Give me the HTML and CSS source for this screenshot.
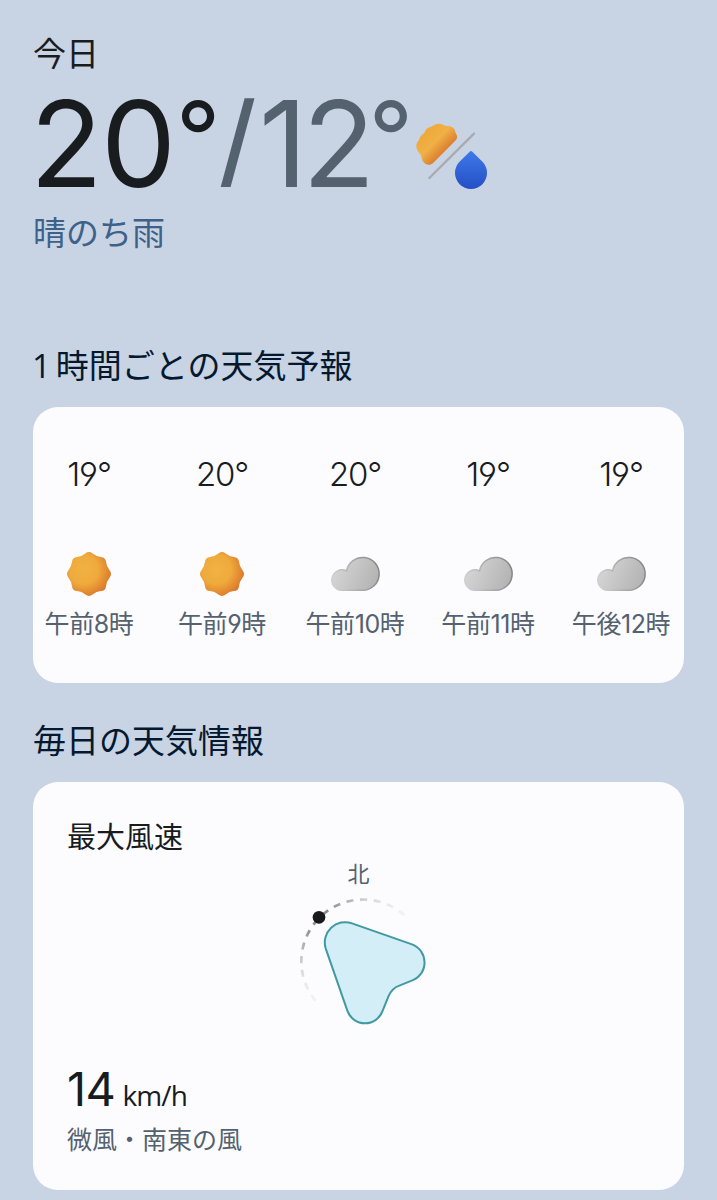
FILE: index.html
```html
<!DOCTYPE html>
<html lang="ja">
<head>
    <meta charset="UTF-8">
    <title>天気</title>
    <link rel="stylesheet" href="styles.css">
</head>
<body>
    <!-- 共通アイコン -->
    <svg class="defs" width="0" height="0">
        <defs>
            <radialGradient id="sunFill" cx="0.38" cy="0.4" r="0.66">
                <stop offset="0" stop-color="#f1b243"/>
                <stop offset="0.5" stop-color="#efaa3c"/>
                <stop offset="1" stop-color="#d9752a"/>
            </radialGradient>
            <linearGradient id="halfSunFill" x1="0.2" y1="0.15" x2="0.75" y2="0.7">
                <stop offset="0" stop-color="#eea838"/>
                <stop offset="0.5" stop-color="#f1b146"/>
                <stop offset="1" stop-color="#d9752a"/>
            </linearGradient>
            <linearGradient id="dropFill" x1="0" y1="0" x2="0" y2="1">
                <stop offset="0" stop-color="#3f78ea"/>
                <stop offset="1" stop-color="#2450c4"/>
            </linearGradient>
            <linearGradient id="cloudFill" x1="0" y1="0.4" x2="1" y2="0.7">
                <stop offset="0" stop-color="#d6d6d6"/>
                <stop offset="1" stop-color="#b2b2b2"/>
            </linearGradient>
            <linearGradient id="cloudEdge" x1="0" y1="0.6" x2="1" y2="0.4">
                <stop offset="0" stop-color="#cfcfcf"/>
                <stop offset="1" stop-color="#858585"/>
            </linearGradient>
            <linearGradient id="arcFade" gradientUnits="userSpaceOnUse" x1="105" y1="450" x2="365" y2="188">
                <stop offset="0" stop-color="#8c8c90" stop-opacity="0.1"/>
                <stop offset="0.4" stop-color="#8c8c90"/>
                <stop offset="0.6" stop-color="#8c8c90"/>
                <stop offset="1" stop-color="#8c8c90" stop-opacity="0.1"/>
            </linearGradient>
        </defs>
        <symbol id="sun" viewBox="-24 -24 48 48">
            <path fill="url(#sunFill)" d="M-3.64 -20.53Q0 -23.5 3.64 -20.53Q7.27 -17.55 11.94 -17.09Q16.62 -16.62 17.09 -11.94Q17.55 -7.27 20.53 -3.64Q23.5 0 20.53 3.64Q17.55 7.27 17.09 11.94Q16.62 16.62 11.94 17.09Q7.27 17.55 3.64 20.53Q0 23.5 -3.64 20.53Q-7.27 17.55 -11.94 17.09Q-16.62 16.62 -17.09 11.94Q-17.55 7.27 -20.53 3.64Q-23.5 0 -20.53 -3.64Q-17.55 -7.27 -17.09 -11.94Q-16.62 -16.62 -11.94 -17.09Q-7.27 -17.55 -3.64 -20.53Z"/>
        </symbol>
        <symbol id="cloud" viewBox="0 0 51 36">
            <path fill="url(#cloudFill)" stroke="url(#cloudEdge)" stroke-width="1.5" d="M11.8 34.3A10.2 10.2 0 1 1 16.6 15A16.4 16.4 0 1 1 32.8 34.3Z"/>
        </symbol>
    </svg>

    <!-- 今日の天気 -->
    <header class="today">
        <div class="today-label">今日</div>
        <div class="today-temp">
            <span class="high">20<span class="deg">°</span></span>
            <span class="low"><span class="slash">/</span><span class="one">1</span>2<span class="deg">°</span></span>
            <svg class="today-icon" viewBox="48 38 216 198">
                <path fill="url(#halfSunFill)" d="M49 108C49 97 56 94 59 84C61 74 70 73 75 64C80 51 88 53 96 48C108 38 120 38 130 44C138 50 152 43 162 55C166 61 165 66 169 72C174 80 171 86 165 92L100 157C92 165 78 166 71 156C64 148 67 141 61 132C54 123 49 118 49 108Z"/>
                <path stroke="#a9abb0" stroke-width="7" stroke-linecap="round" d="M222 70L88 203"/>
                <path fill="url(#dropFill)" d="M209 124Q213 120 217 124L246 153A48 48 0 1 1 180 153Z"/>
            </svg>
        </div>
        <div class="today-condition">晴のち雨</div>
    </header>

    <!-- 1時間ごとの予報 -->
    <h2 class="section-title hourly-title"><span class="count">1 </span>時間ごとの天気予報</h2>
    <section class="card hourly">
        <div class="hour">
            <div class="hour-temp">19°</div>
            <svg class="hour-icon sun"><use href="#sun"/></svg>
            <div class="hour-label">午前8時</div>
        </div>
        <div class="hour">
            <div class="hour-temp">20°</div>
            <svg class="hour-icon sun"><use href="#sun"/></svg>
            <div class="hour-label">午前9時</div>
        </div>
        <div class="hour">
            <div class="hour-temp">20°</div>
            <svg class="hour-icon cloud"><use href="#cloud"/></svg>
            <div class="hour-label">午前10時</div>
        </div>
        <div class="hour">
            <div class="hour-temp">19°</div>
            <svg class="hour-icon cloud"><use href="#cloud"/></svg>
            <div class="hour-label">午前11時</div>
        </div>
        <div class="hour">
            <div class="hour-temp">19°</div>
            <svg class="hour-icon cloud"><use href="#cloud"/></svg>
            <div class="hour-label">午後12時</div>
        </div>
    </section>

    <!-- 風の情報 -->
    <h2 class="section-title daily-title">毎日の天気情報</h2>
    <section class="card wind">
        <h3 class="wind-title">最大風速</h3>
        <div class="compass">
            <div class="north">北</div>
            <svg class="compass-dial" viewBox="0 120 480 420">
                <path fill="none" stroke="url(#arcFade)" stroke-width="8" stroke-dasharray="21 20" d="M373 195A186 186 0 0 0 110 457"/>
                <circle cx="117" cy="202" r="19" fill="#171a1d"/>
                <path fill="#d3eef6" stroke="#4199a3" stroke-width="6" d="M216 220L396 283A58 58 0 0 1 395 392L360 406Q335 414 325 440L308 482A56 56 0 0 1 202 482L137 295A61 61 0 0 1 216 220Z"/>
            </svg>
        </div>
        <div class="wind-speed"><span class="value">14</span><span class="unit">km/h</span></div>
        <div class="wind-text">微風・南東の風</div>
    </section>
</body>
</html>
```
FILE: styles.css
```css
:root {
    --page-bg: #c8d3e3;
    --card-bg: #fcfcff;
    --text: #191c1f;
    --text-muted: #54616f;
    --heading: #04192f;
    --condition: #3e6189;
}

* {
    box-sizing: border-box;
}

body {
    margin: 0;
    padding: 32px 33px 0;
    background: var(--page-bg);
    color: var(--text);
    font-family: "Noto Sans CJK JP", sans-serif;
    height: 1200px;
    overflow: hidden;
}

h2, h3 {
    margin: 0;
    font-weight: 400;
}

svg {
    display: block;
}

.defs {
    position: absolute;
}

.today-label,
.today-condition,
.section-title {
    font-size: 33px;
    line-height: 40px;
}

.today-temp {
    display: flex;
    height: 120px;
    margin: 12px 0 0 -3px;
    font-family: Inter, sans-serif;
    font-size: 119px;
    line-height: 120px;
    letter-spacing: -1.5px;
    white-space: nowrap;
}

.today-temp .low {
    color: var(--text-muted);
}

.today-temp .deg {
    margin-left: 1px;
    font-size: 98px;
    line-height: 0;
    vertical-align: 15px;
}

.today-temp .low .deg {
    margin-left: -5px;
}

.today-temp .slash {
    margin: 0 4px 0 0;
    font-size: 102px;
    font-weight: 500;
    line-height: 0;
    vertical-align: 11px;
}

.today-temp .one {
    letter-spacing: -5px;
}

.today-icon {
    width: 72px;
    height: 66px;
    margin: 39px 0 0 4px;
}

.today-condition {
    margin-top: 7px;
    color: var(--condition);
}

.section-title {
    color: var(--heading);
}

.section-title .count {
    margin-left: -1px;
    font-family: "Open Sans", sans-serif;
    line-height: 0;
    letter-spacing: -1.8px;
}

.hourly-title {
    margin-top: 93px;
}

.daily-title {
    margin-top: 36px;
}

.card {
    width: 651px;
    background: var(--card-bg);
    border-radius: 25px;
    margin-top: 23px;
}

.hourly {
    display: grid;
    grid-template-columns: repeat(5, 133px);
    height: 276px;
    padding-top: 47px;
    overflow: hidden;
}

.hour {
    display: flex;
    flex-direction: column;
    align-items: center;
    margin-left: -21px;
}

.hour-temp {
    font-family: Inter, sans-serif;
    font-size: 33px;
    font-weight: 360;
    line-height: 40px;
    letter-spacing: -1.2px;
    font-feature-settings: "cv04", "ss01";
}

.hour-icon.sun {
    width: 48px;
    height: 48px;
    margin: 56px 0 10px;
}

.hour-icon.cloud {
    width: 51px;
    height: 36px;
    margin: 62px 0 16px;
}

.hour-label {
    color: var(--text-muted);
    font-family: Inter, "Noto Sans CJK JP", sans-serif;
    font-size: 25px;
    line-height: 32px;
    letter-spacing: -0.4px;
    font-feature-settings: "cv04";
}

.wind {
    height: 408px;
    padding: 35px 34px 0;
}

.wind-title {
    font-size: 29px;
    line-height: 36px;
}

.compass {
    display: flex;
    flex-direction: column;
    align-items: center;
}

.north {
    color: var(--text-muted);
    font-size: 22px;
    line-height: 30px;
    margin-top: 4px;
}

.compass-dial {
    width: 160px;
    height: 140px;
    margin: 3px 0 0 2px;
}

.wind-speed {
    display: flex;
    align-items: baseline;
    gap: 7px;
    margin-top: 29px;
    font-family: Inter, sans-serif;
    line-height: 60px;
}

.wind-speed .value {
    font-size: 47px;
    letter-spacing: -0.5px;
}

.wind-speed .unit {
    font-family: "Open Sans", sans-serif;
    font-size: 28px;
    letter-spacing: -0.9px;
}

.wind-text {
    color: var(--text-muted);
    font-size: 25px;
    line-height: 32px;
    margin-top: -3px;
}
```
